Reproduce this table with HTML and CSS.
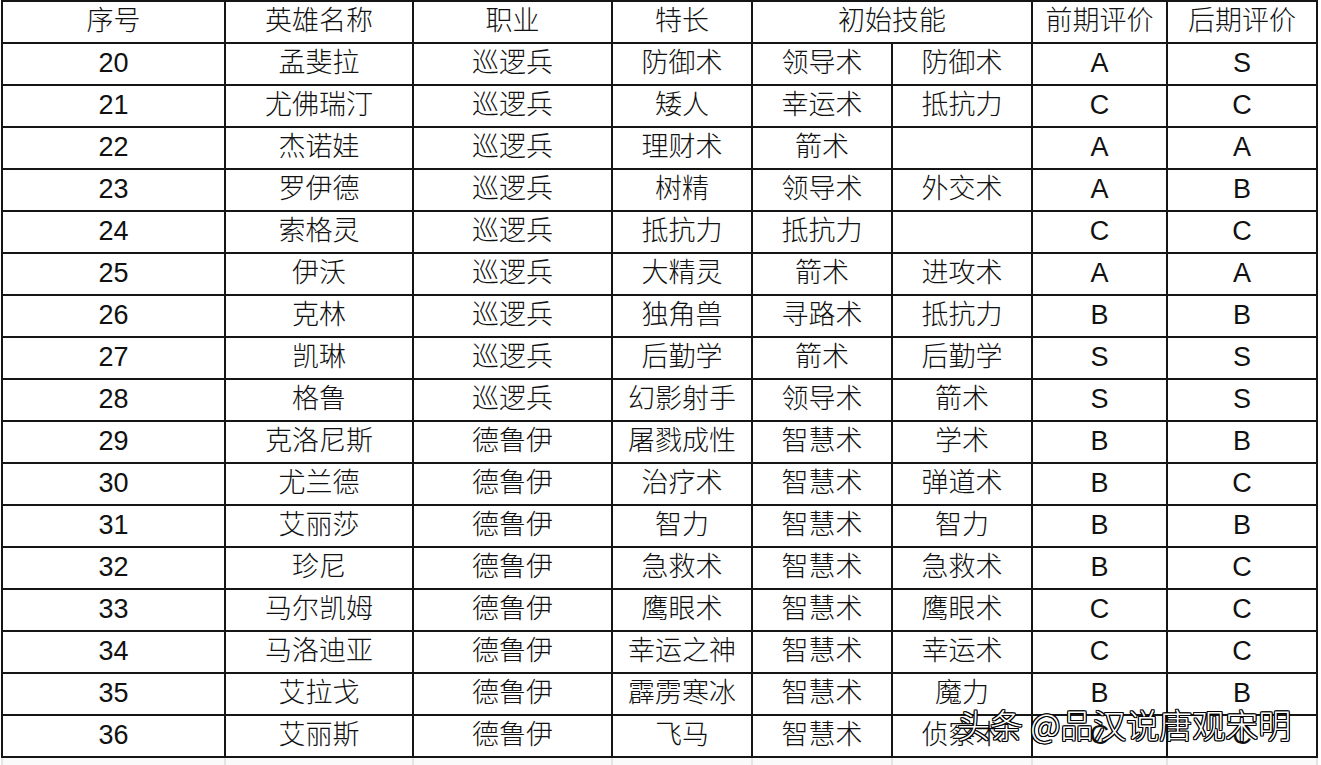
FILE: index.html
```html
<!DOCTYPE html>
<html lang="zh-CN">
<head>
<meta charset="utf-8">
<title>英雄列表</title>
<link rel="stylesheet" href="styles.css">
</head>
<body>
<div class="page">
  <div class="sheet">
    <div class="cell">序号</div><div class="cell">英雄名称</div><div class="cell">职业</div><div class="cell">特长</div><div class="cell span2">初始技能</div><div class="cell">前期评价</div><div class="cell">后期评价</div>

    <div class="cell">20</div><div class="cell">孟斐拉</div><div class="cell">巡逻兵</div><div class="cell">防御术</div><div class="cell">领导术</div><div class="cell">防御术</div><div class="cell">A</div><div class="cell">S</div>
    <div class="cell">21</div><div class="cell">尤佛瑞汀</div><div class="cell">巡逻兵</div><div class="cell">矮人</div><div class="cell">幸运术</div><div class="cell">抵抗力</div><div class="cell">C</div><div class="cell">C</div>
    <div class="cell">22</div><div class="cell">杰诺娃</div><div class="cell">巡逻兵</div><div class="cell">理财术</div><div class="cell">箭术</div><div class="cell"></div><div class="cell">A</div><div class="cell">A</div>
    <div class="cell">23</div><div class="cell">罗伊德</div><div class="cell">巡逻兵</div><div class="cell">树精</div><div class="cell">领导术</div><div class="cell">外交术</div><div class="cell">A</div><div class="cell">B</div>
    <div class="cell">24</div><div class="cell">索格灵</div><div class="cell">巡逻兵</div><div class="cell">抵抗力</div><div class="cell">抵抗力</div><div class="cell"></div><div class="cell">C</div><div class="cell">C</div>
    <div class="cell">25</div><div class="cell">伊沃</div><div class="cell">巡逻兵</div><div class="cell">大精灵</div><div class="cell">箭术</div><div class="cell">进攻术</div><div class="cell">A</div><div class="cell">A</div>
    <div class="cell">26</div><div class="cell">克林</div><div class="cell">巡逻兵</div><div class="cell">独角兽</div><div class="cell">寻路术</div><div class="cell">抵抗力</div><div class="cell">B</div><div class="cell">B</div>
    <div class="cell">27</div><div class="cell">凯琳</div><div class="cell">巡逻兵</div><div class="cell">后勤学</div><div class="cell">箭术</div><div class="cell">后勤学</div><div class="cell">S</div><div class="cell">S</div>
    <div class="cell">28</div><div class="cell">格鲁</div><div class="cell">巡逻兵</div><div class="cell">幻影射手</div><div class="cell">领导术</div><div class="cell">箭术</div><div class="cell">S</div><div class="cell">S</div>
    <div class="cell">29</div><div class="cell">克洛尼斯</div><div class="cell">德鲁伊</div><div class="cell">屠戮成性</div><div class="cell">智慧术</div><div class="cell">学术</div><div class="cell">B</div><div class="cell">B</div>
    <div class="cell">30</div><div class="cell">尤兰德</div><div class="cell">德鲁伊</div><div class="cell">治疗术</div><div class="cell">智慧术</div><div class="cell">弹道术</div><div class="cell">B</div><div class="cell">C</div>
    <div class="cell">31</div><div class="cell">艾丽莎</div><div class="cell">德鲁伊</div><div class="cell">智力</div><div class="cell">智慧术</div><div class="cell">智力</div><div class="cell">B</div><div class="cell">B</div>
    <div class="cell">32</div><div class="cell">珍尼</div><div class="cell">德鲁伊</div><div class="cell">急救术</div><div class="cell">智慧术</div><div class="cell">急救术</div><div class="cell">B</div><div class="cell">C</div>
    <div class="cell">33</div><div class="cell">马尔凯姆</div><div class="cell">德鲁伊</div><div class="cell">鹰眼术</div><div class="cell">智慧术</div><div class="cell">鹰眼术</div><div class="cell">C</div><div class="cell">C</div>
    <div class="cell">34</div><div class="cell">马洛迪亚</div><div class="cell">德鲁伊</div><div class="cell">幸运之神</div><div class="cell">智慧术</div><div class="cell">幸运术</div><div class="cell">C</div><div class="cell">C</div>
    <div class="cell">35</div><div class="cell">艾拉戈</div><div class="cell">德鲁伊</div><div class="cell">霹雳寒冰</div><div class="cell">智慧术</div><div class="cell">魔力</div><div class="cell">B</div><div class="cell">B</div>
    <div class="cell">36</div><div class="cell">艾丽斯</div><div class="cell">德鲁伊</div><div class="cell">飞马</div><div class="cell">智慧术</div><div class="cell">侦察术</div><div class="cell">C</div><div class="cell">C</div>
  </div>
  <div class="below">
    <div class="blank"></div><div class="blank"></div><div class="blank"></div><div class="blank"></div><div class="blank"></div><div class="blank"></div><div class="blank"></div><div class="blank"></div>
  </div>
  <div class="watermark">头条 @品汉说唐观宋明</div>
</div>
</body>
</html>
```

FILE: styles.css
```css
html, body {
  margin: 0;
  padding: 0;
  background: #ffffff;
}

body {
  font-family: "Liberation Sans", "Noto Sans CJK SC", sans-serif;
  color: #111111;
}

.page {
  position: relative;
  width: 1321px;
  height: 765px;
  overflow: hidden;
  padding-left: 1px;
  box-sizing: border-box;
}

.sheet {
  display: grid;
  grid-template-columns: 221px 186px 197px 138px 138px 138px 133px 148px;
  grid-auto-rows: 40px;
  gap: 2px;
  padding: 2px;
  background: #151515;
  width: max-content;
}

.cell {
  background: #ffffff;
  display: flex;
  align-items: center;
  justify-content: center;
  font-size: 27px;
  font-weight: 300;
  line-height: 1;
  white-space: nowrap;
  padding-bottom: 1px;
  box-sizing: border-box;
}

.span2 {
  grid-column: span 2;
}

.below {
  display: grid;
  grid-template-columns: 221px 186px 197px 138px 138px 138px 133px 148px;
  grid-auto-rows: 12px;
  column-gap: 2px;
  padding: 0 2px;
  background: #e4e4e4;
  width: max-content;
}

.blank {
  background: #fafafa;
}

.watermark {
  position: absolute;
  left: 957px;
  top: 708px;
  font-family: "Noto Sans CJK SC", sans-serif;
  font-size: 33px;
  font-weight: 300;
  line-height: 1;
  color: #ffffff;
  white-space: nowrap;
  text-shadow:
    1px 0 0 #000, -1px 0 0 #000, 0 1px 0 #000, 0 -1px 0 #000,
    1px 1px 0 #000, -1px -1px 0 #000, 1px -1px 0 #000, -1px 1px 0 #000;
}
```
